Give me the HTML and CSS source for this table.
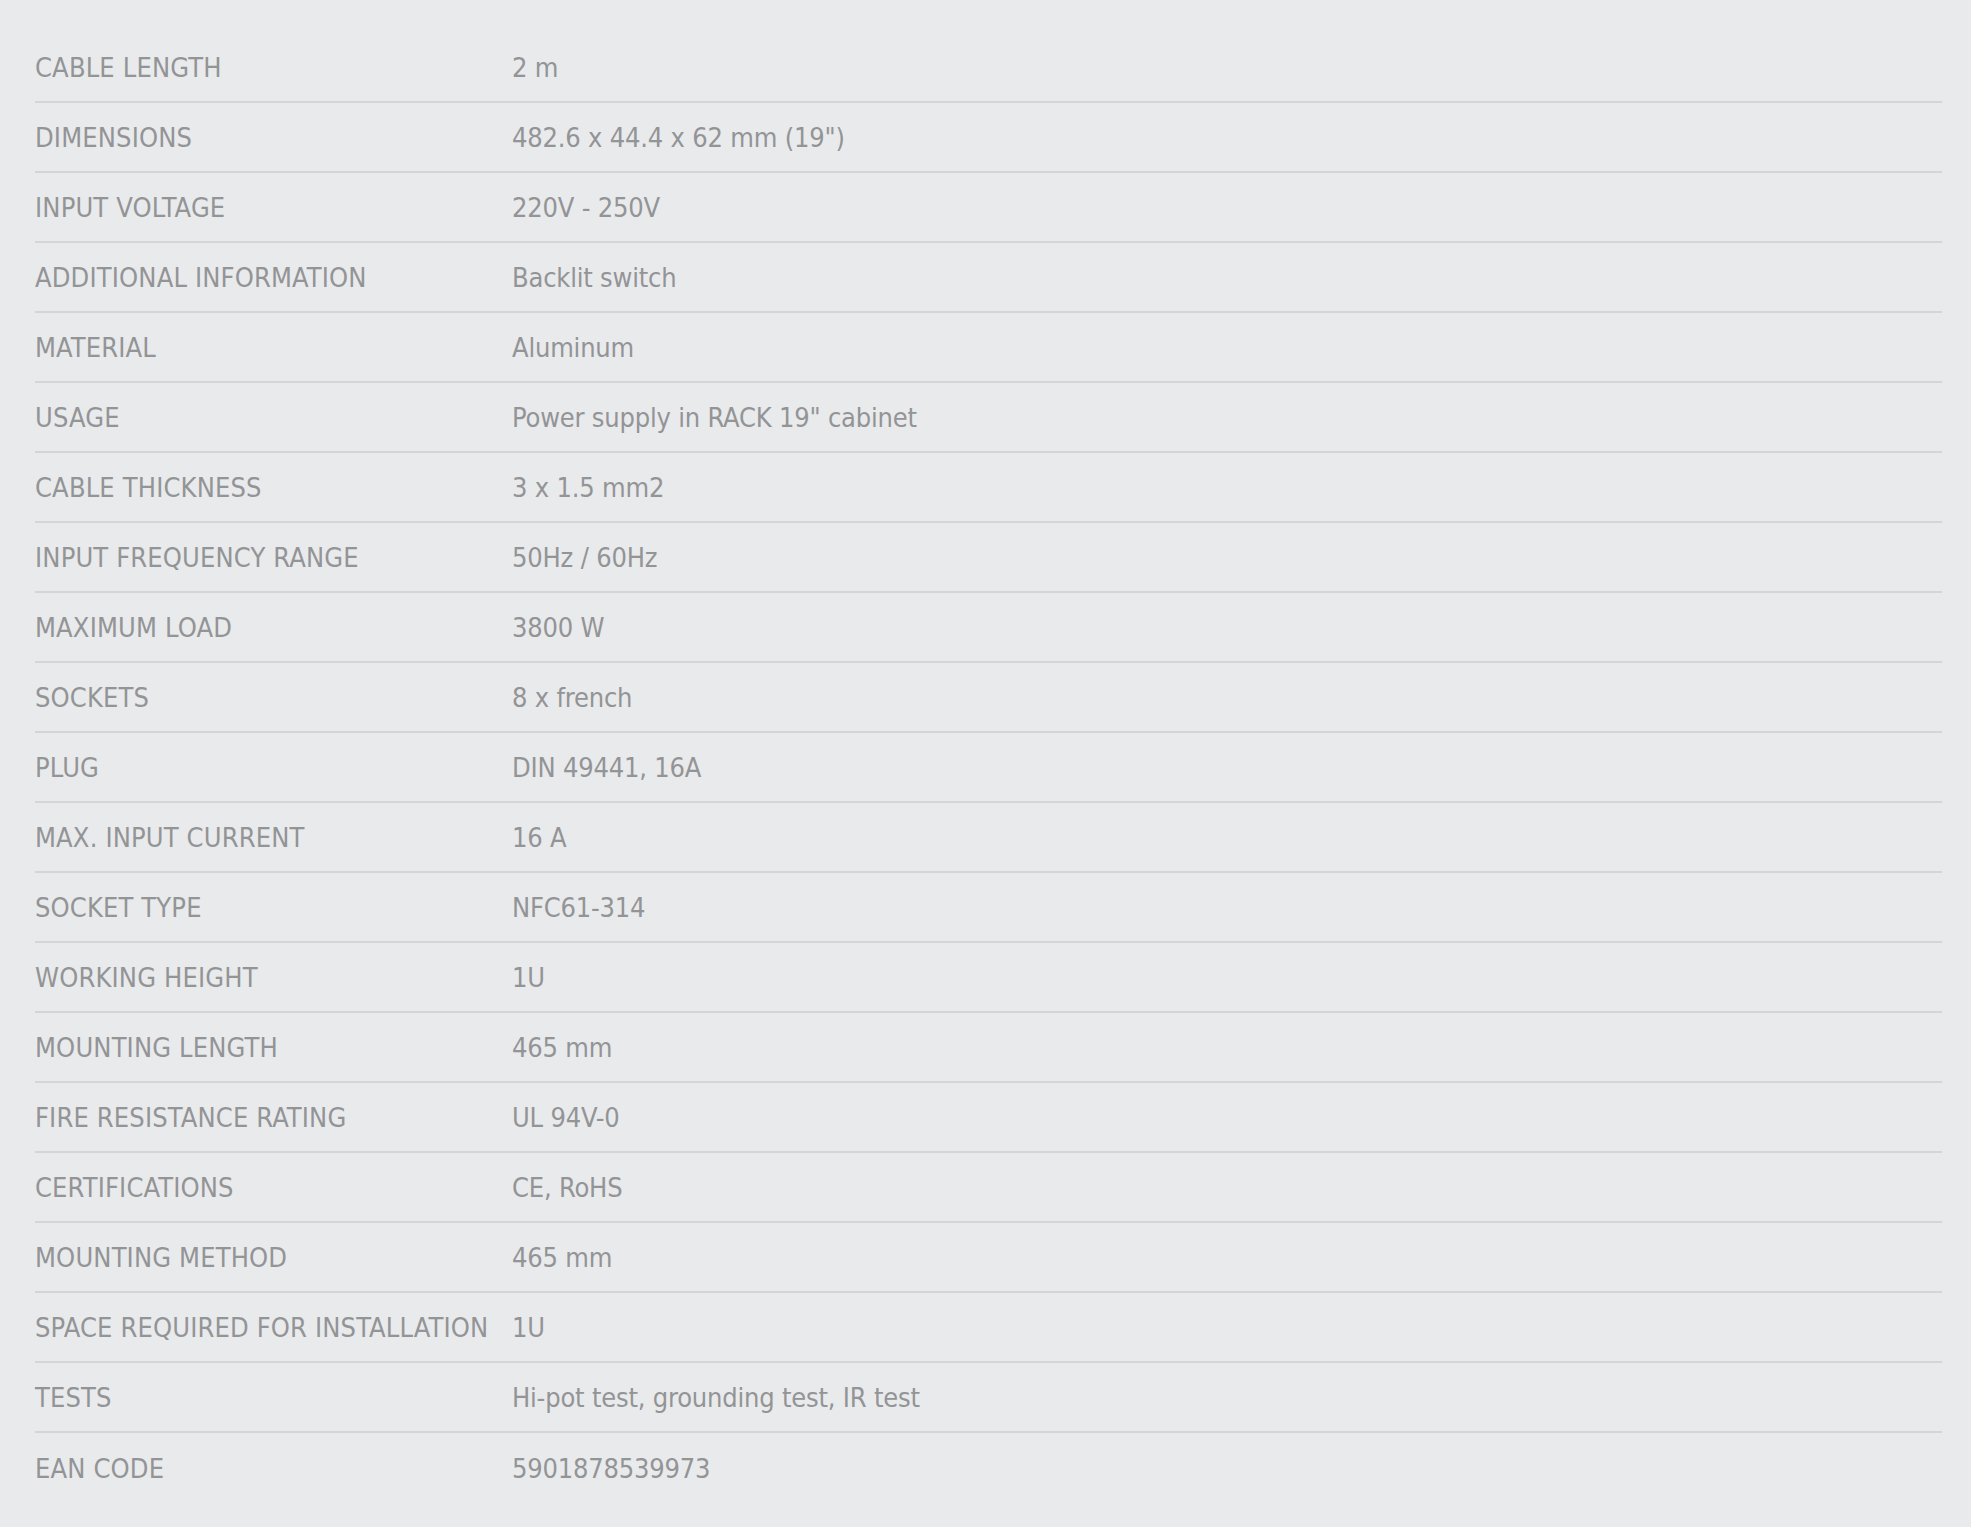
FILE: index.html
```html
<!DOCTYPE html>
<html lang="en">
<head>
<meta charset="utf-8">
<title>Specifications</title>
<link rel="stylesheet" href="styles.css">
</head>
<body>
<div class="specs">
  <div class="row"><div class="label">CABLE LENGTH</div><div class="value">2 m</div></div>
  <div class="row"><div class="label">DIMENSIONS</div><div class="value">482.6 x 44.4 x 62 mm (19")</div></div>
  <div class="row"><div class="label">INPUT VOLTAGE</div><div class="value">220V - 250V</div></div>
  <div class="row"><div class="label">ADDITIONAL INFORMATION</div><div class="value">Backlit switch</div></div>
  <div class="row"><div class="label">MATERIAL</div><div class="value">Aluminum</div></div>
  <div class="row"><div class="label">USAGE</div><div class="value">Power supply in RACK 19" cabinet</div></div>
  <div class="row"><div class="label">CABLE THICKNESS</div><div class="value">3 x 1.5 mm2</div></div>
  <div class="row"><div class="label">INPUT FREQUENCY RANGE</div><div class="value">50Hz / 60Hz</div></div>
  <div class="row"><div class="label">MAXIMUM LOAD</div><div class="value">3800 W</div></div>
  <div class="row"><div class="label">SOCKETS</div><div class="value">8 x french</div></div>
  <div class="row"><div class="label">PLUG</div><div class="value">DIN 49441, 16A</div></div>
  <div class="row"><div class="label">MAX. INPUT CURRENT</div><div class="value">16 A</div></div>
  <div class="row"><div class="label">SOCKET TYPE</div><div class="value">NFC61-314</div></div>
  <div class="row"><div class="label">WORKING HEIGHT</div><div class="value">1U</div></div>
  <div class="row"><div class="label">MOUNTING LENGTH</div><div class="value">465 mm</div></div>
  <div class="row"><div class="label">FIRE RESISTANCE RATING</div><div class="value">UL 94V-0</div></div>
  <div class="row"><div class="label">CERTIFICATIONS</div><div class="value">CE, RoHS</div></div>
  <div class="row"><div class="label">MOUNTING METHOD</div><div class="value">465 mm</div></div>
  <div class="row"><div class="label">SPACE REQUIRED FOR INSTALLATION</div><div class="value">1U</div></div>
  <div class="row"><div class="label">TESTS</div><div class="value">Hi-pot test, grounding test, IR test</div></div>
  <div class="row"><div class="label">EAN CODE</div><div class="value">5901878539973</div></div>
</div>
</body>
</html>
```
FILE: styles.css
```css
html, body {
  margin: 0;
  padding: 0;
  background: #e9eaec;
}
body {
  font-family: "Liberation Sans Narrow", "DejaVu Sans Condensed", "Liberation Sans", sans-serif;
  font-size: 27px;
  color: #939496;
}
.specs {
  padding: 33px 29px 24px 35px;
}
.row {
  display: grid;
  grid-template-columns: 477px 1fr;
  align-items: center;
  height: 70px;
  box-sizing: border-box;
  border-bottom: 2px solid #d4d5d7;
}
.row:last-child {
  border-bottom: none;
}
.label {
  white-space: nowrap;
  letter-spacing: 0.15px;
}
.value {
  white-space: nowrap;
  letter-spacing: -0.2px;
}
```
